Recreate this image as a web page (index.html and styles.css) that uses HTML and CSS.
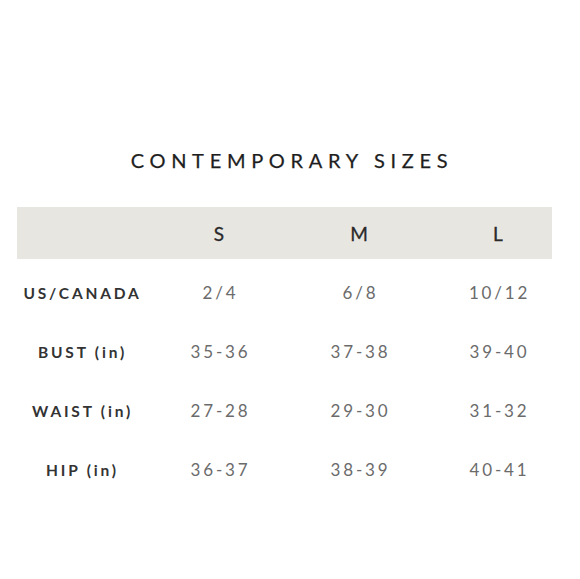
FILE: index.html
```html
<!DOCTYPE html>
<html>
<head>
<meta charset="utf-8">
<link rel="stylesheet" href="styles.css">
</head>
<body>
<div class="page">
  <h1 class="title">CONTEMPORARY SIZES</h1>
  <div class="chart">
    <div class="row head">
      <div class="cell"></div>
      <div class="cell size">S</div>
      <div class="cell size">M</div>
      <div class="cell size">L</div>
    </div>
    <div class="row">
      <div class="cell label">US/CANADA</div>
      <div class="cell val">2/4</div>
      <div class="cell val">6/8</div>
      <div class="cell val">10/12</div>
    </div>
    <div class="row">
      <div class="cell label">BUST (in)</div>
      <div class="cell val">35-36</div>
      <div class="cell val">37-38</div>
      <div class="cell val">39-40</div>
    </div>
    <div class="row">
      <div class="cell label">WAIST (in)</div>
      <div class="cell val">27-28</div>
      <div class="cell val">29-30</div>
      <div class="cell val">31-32</div>
    </div>
    <div class="row">
      <div class="cell label">HIP (in)</div>
      <div class="cell val">36-37</div>
      <div class="cell val">38-39</div>
      <div class="cell val">40-41</div>
    </div>
  </div>
</div>
</body>
</html>
```

FILE: styles.css
```css
html, body {
  margin: 0;
  padding: 0;
  background: #ffffff;
}
.page {
  width: 580px;
  height: 579px;
  padding-top: 146px;
  box-sizing: border-box;
  font-family: "Lato", "DejaVu Sans", sans-serif;
}
.title {
  margin: 0;
  padding-left: 4px;
  text-align: center;
  font-size: 20px;
  font-weight: 400;
  letter-spacing: 5.7px;
  color: #1e1e1e;
  line-height: 28px;
  -webkit-text-stroke: 0.25px #1e1e1e;
}
.chart {
  margin: 33px 0 0 17px;
  width: 535px;
}
.row {
  display: grid;
  grid-template-columns: 128px 148px 132px 146px;
  height: 59px;
  align-items: center;
}
.row.head {
  background: #e8e6e1;
  height: 52px;
  margin-bottom: 4px;
}
.cell {
  text-align: center;
  white-space: nowrap;
}
.size {
  font-size: 19px;
  color: #2a2a2a;
  font-weight: 400;
  -webkit-text-stroke: 0.3px #2a2a2a;
}
.label {
  font-size: 15.5px;
  font-weight: 700;
  letter-spacing: 2.8px;
  padding-left: 3px;
  color: #333333;
}
.val {
  font-size: 17px;
  font-weight: 400;
  letter-spacing: 2.8px;
  padding-left: 3px;
  color: #6b6b6b;
}
```
